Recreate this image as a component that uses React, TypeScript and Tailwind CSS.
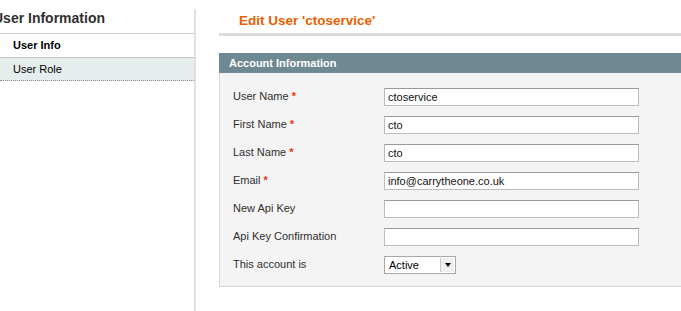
import React from "react";

const fields = [
    { label: "User Name", required: true, value: "ctoservice" },
    { label: "First Name", required: true, value: "cto" },
    { label: "Last Name", required: true, value: "cto" },
    { label: "Email", required: true, value: "info@carrytheone.co.uk" },
    { label: "New Api Key", required: false, value: "" },
    { label: "Api Key Confirmation", required: false, value: "" },
];

const App = () => {
    return (
        <div className="w-[681px] h-[311px] overflow-hidden bg-white flex font-['Liberation_Sans',Arial,sans-serif] text-[#2f2f2f]">
            {/* Sidebar */}
            <div className="w-[196px] shrink-0 pt-[9px]">
                <div className="h-full border-r-2 border-[#e0e0e0]">
                    <div className="h-[25px] border-b border-[#cfcfcf] pt-[1px]">
                        <h3 className="ml-[-7px] text-[14px] leading-[16px] font-bold text-[#2f2f2f] whitespace-nowrap">
                            User Information
                        </h3>
                    </div>
                    <div className="h-[24px] border-b border-[#c4c4c4] pl-[13px] text-[11px] leading-[23px] font-bold text-black">
                        User Info
                    </div>
                    <div className="h-[23px] bg-[#e5eeec] border-b border-dotted border-[#8a8a8a] pl-[13px] text-[11px] leading-[22px] text-black">
                        User Role
                    </div>
                </div>
            </div>

            {/* Main */}
            <div className="ml-[23px] w-[480px] shrink-0">
                <div className="h-[36px] border-b-[3px] border-[#dcdcdc] pt-[13px] pl-[20px]">
                    <h3 className="text-[13.5px] leading-[16px] font-bold text-[#eb5e00] whitespace-nowrap">
                        Edit User 'ctoservice'
                    </h3>
                </div>

                <div className="mt-[17px]">
                    <div className="h-[20px] bg-[#6f8992] pl-[10px] text-[11px] leading-[20px] font-bold text-white">
                        Account Information
                    </div>
                    <div className="h-[214px] bg-[#f4f4f4] border border-t-0 border-[#d6d6d6] pl-[13px] pt-[15px] flex flex-col gap-[10px]">
                        {fields.map((f) => (
                            <div key={f.label} className="flex h-[18px] items-start">
                                <label className="w-[151px] shrink-0 text-[11px] leading-[16px] text-[#2f2f2f]">
                                    {f.label}
                                    {f.required && <span className="text-[#eb340a] font-bold"> *</span>}
                                </label>
                                <div className="w-[255px] h-[18px] bg-white border border-[#bdbdbd] border-t-[#9a9a9a] pl-[3px] text-[11px] leading-[16px] text-[#111]">
                                    {f.value}
                                </div>
                            </div>
                        ))}
                        <div className="flex h-[18px] items-start">
                            <label className="w-[151px] shrink-0 text-[11px] leading-[16px] text-[#2f2f2f]">
                                This account is
                            </label>
                            <div className="w-[72px] h-[18px] bg-white border border-[#a8a8a8] flex items-stretch">
                                <span className="flex-1 pl-[4px] text-[11px] leading-[16px] text-black">Active</span>
                                <span className="w-[14px] my-[1px] mr-[1px] bg-[#f0f0f0] border-l border-[#c8c8c8] flex items-center justify-center">
                                    <span className="w-0 h-0 border-l-[3px] border-r-[3px] border-t-[4px] border-l-transparent border-r-transparent border-t-black" />
                                </span>
                            </div>
                        </div>
                    </div>
                </div>
            </div>
        </div>
    );
};

export default App;
